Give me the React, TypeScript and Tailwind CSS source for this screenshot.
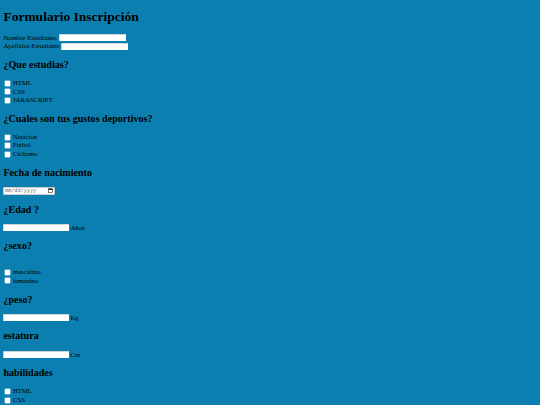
import React from "react";

const serif = { fontFamily: '"Liberation Serif", "Times New Roman", serif' };

function H2({ children }: { children: React.ReactNode }) {
  return (
    <h2 className="mt-[8.4px] mb-[8.4px] h-[11.6px] text-[10.1px] leading-[11.6px] font-bold whitespace-nowrap">
      {children}
    </h2>
  );
}

function Box() {
  return (
    <span className="ml-[1.7px] mr-[1.3px] inline-block w-[5px] h-[5px] bg-white rounded-[0.6px] shadow-[0_0_0_0.4px_#c9d3d8] shrink-0" />
  );
}

function Check({ label }: { label: string }) {
  return (
    <div className="flex items-center h-[8.5px] text-[6.75px] whitespace-nowrap">
      <Box />
      <span className="ml-[1.5px]">{label}</span>
    </div>
  );
}

function TextInput() {
  return <span className="inline-block w-[66.4px] h-[7.4px] bg-white shadow-[inset_0.5px_0.5px_0_#9fb0b8] shrink-0" />;
}

function UnitRow({ unit }: { unit: string }) {
  return (
    <div className="flex items-center h-[8.5px] text-[6.75px] whitespace-nowrap">
      <span className="inline-block w-[66px] h-[7.4px] bg-white shadow-[inset_0.5px_0.5px_0_#9fb0b8]" />
      <span className="ml-[1px]">{unit}</span>
    </div>
  );
}

export default function App() {
  return (
    <div className="min-h-screen w-full bg-[#0b80b0] text-black pl-[3.4px] pt-[9px] overflow-hidden" style={serif}>
      <h1 className="h-[15.5px] text-[13.5px] leading-[15.5px] font-bold mb-[9px] whitespace-nowrap">
        Formulario Inscripción
      </h1>
      <div className="flex items-center h-[8.5px] text-[6.75px] whitespace-nowrap">
        <span>Nombre Estudiante:</span>
        <span className="ml-[1.6px]" />
        <TextInput />
      </div>
      <div className="flex items-center h-[8.5px] text-[6.75px] whitespace-nowrap">
        <span>Apellidos Estudiante</span>
        <span className="ml-[1.6px]" />
        <TextInput />
      </div>

      <H2>¿Que estudias?</H2>
      <Check label="HTML" />
      <Check label="CSS" />
      <Check label="JARASCRIPT" />

      <H2>¿Cuales son tus gustos deportivos?</H2>
      <Check label="Natación" />
      <Check label="Futbol" />
      <Check label="Ciclismo" />

      <H2>Fecha de nacimiento</H2>
      <div className="flex items-center h-[8.5px]">
        <div
          className="flex items-center justify-between w-[51.6px] h-[8.4px] bg-white shadow-[inset_0_0_0_0.6px_#9a9a9a] rounded-[0.6px] pl-[1.6px] pr-[1.8px]"
          style={{ fontFamily: '"DejaVu Sans Mono", "Liberation Mono", monospace' }}
        >
          <span className="text-[5.2px] leading-none text-[#6a6a6a]">mm/dd/yyyy</span>
          <svg width="5" height="5" viewBox="0 0 10 10" className="shrink-0">
            <rect x="1" y="1.5" width="8" height="7.5" fill="none" stroke="#222" strokeWidth="1.2" />
            <rect x="1" y="1.5" width="8" height="2.4" fill="#222" />
          </svg>
        </div>
      </div>

      <H2>¿Edad ?</H2>
      <UnitRow unit="Años" />

      <H2>¿sexo?</H2>
      <div className="h-[7.8px]" />
      <Check label="masculino" />
      <Check label="femenino" />

      <H2>¿peso?</H2>
      <UnitRow unit="Kg" />

      <H2>estatura</H2>
      <UnitRow unit="Cm" />

      <H2>habilidades</H2>
      <Check label="HTML" />
      <Check label="CSS" />
    </div>
  );
}
